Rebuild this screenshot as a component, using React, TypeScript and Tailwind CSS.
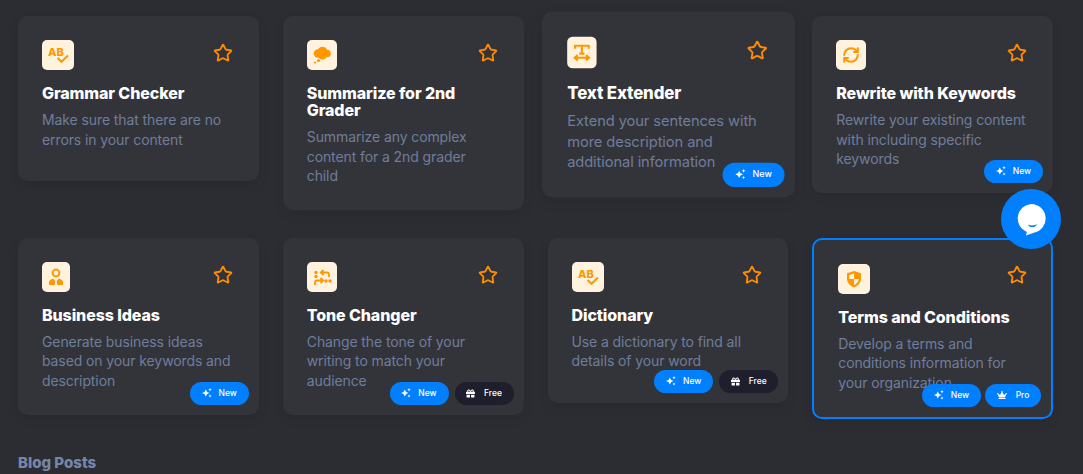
import { RefreshCw, Star } from "lucide-react";
import { FaCrown, FaGift } from "react-icons/fa";
import type { ReactNode } from "react";

const abIcon = (
  <svg width="32" height="30" viewBox="0 0 32 30" fill="none">
    <text x="6" y="15.500" fontSize="11" fontWeight="800" fill="#ff9800" fontFamily="Inter, sans-serif">AB</text>
    <path d="M15.500 18l4 3.800 6.500-6.300" stroke="#ff9800" strokeWidth="2" />
  </svg>
);

const cloudIcon = (
  <svg width="30" height="30" viewBox="0 0 30 30" fill="#ff9800">
    <circle cx="11" cy="13.500" r="4.200" />
    <circle cx="15.500" cy="11.500" r="4.800" />
    <circle cx="20" cy="13.500" r="3.800" />
    <circle cx="15.500" cy="15.500" r="4" />
    <circle cx="11.500" cy="20.500" r="1.500" />
    <circle cx="8" cy="22.500" r="1.100" />
  </svg>
);

const textIcon = (
  <svg width="28" height="30" viewBox="0 0 28 30" fill="none" stroke="#ff9800" strokeWidth="2">
    <path d="M7.500 11.500V8.500h13v3M14 8.500v7.500M11.500 16h5" />
    <path d="M7.500 20h13M10 17.500L7.200 20l2.800 2.500M18 17.500l2.800 2.500-2.800 2.500" />
  </svg>
);

const personIcon = (
  <svg width="28" height="30" viewBox="0 0 28 30" fill="none">
    <circle cx="14" cy="11" r="3.400" stroke="#ff9800" strokeWidth="2" />
    <path d="M7 23v-2.500c0-2.200 2-3.600 4.500-3.800L13.200 19l-.4 4zM21 23v-2.500c0-2.200-2-3.600-4.500-3.800L14.800 19l.4 4z" fill="#ff9800" />
  </svg>
);

const toneIcon = (
  <svg width="30" height="30" viewBox="0 0 30 30" fill="none" stroke="#ff9800" strokeWidth="1.800">
    <circle cx="9" cy="10.500" r="1.700" fill="#ff9800" stroke="none" />
    <circle cx="9" cy="14.500" r="1.700" fill="#ff9800" stroke="none" />
    <path d="M22 15v-2.500c0-1.200-.8-2-2-2h-6M16.500 8l-2.700 2.500 2.700 2.500" />
    <circle cx="19" cy="19" r="1.700" fill="#ff9800" stroke="none" />
    <circle cx="23" cy="19" r="1.700" fill="#ff9800" stroke="none" />
    <path d="M8 23v-2.500c0-1.200.8-2 2-2h6M13.500 16l2.700 2.500-2.700 2.500" />
  </svg>
);

const shieldIcon = (
  <svg width="32" height="30" viewBox="0 0 32 30">
    <path d="M16 7l7 2.300v5.200c0 4.300-2.900 7.400-7 9-4.100-1.600-7-4.700-7-9V9.300z" fill="#ff9800" />
    <path d="M16 9.500l-4.800 1.600V15H16zM16 15h4.800c-.4 2.800-2.200 4.700-4.800 6z" fill="#fff3e0" />
  </svg>
);

const refreshIcon = (
  <div className="flex h-[30px] w-[30px] items-center justify-center">
    <RefreshCw size={18} color="#ff9800" strokeWidth={2.800} />
  </div>
);

function Sparkle() {
  return (
    <svg width="10" height="10" viewBox="0 0 10 10" fill="#fff">
      <path d="M3.800 1.500l1.300 2.400L7.500 5 5.100 6.100 3.800 8.500 2.500 6.100 0 5l2.500-1.100z" />
      <path d="M8 0l.5 1.200 1.200.5-1.200.5L8 3.400l-.5-1.200-1.200-.5 1.200-.5zM8 6.500l.5 1 1 .5-1 .5-.5 1-.5-1-1-.5 1-.5z" />
    </svg>
  );
}

function Badge({ kind }: { kind: string }) {
  if (kind === "Free") {
    return (
      <span className="flex h-[23px] w-[59px] items-center justify-center gap-[9px] rounded-full bg-[#1e1e2d] text-[8.5px] font-medium text-white">
        <FaGift size={9} />
        Free
      </span>
    );
  }
  if (kind === "Pro") {
    return (
      <span className="flex h-[23px] w-[56px] items-center justify-center gap-[9px] rounded-full bg-[#007fff] text-[8.5px] font-medium text-white">
        <FaCrown size={10} />
        Pro
      </span>
    );
  }
  return (
    <span className="flex h-[23px] w-[59px] items-center justify-center gap-[7px] rounded-full bg-[#007fff] text-[8.5px] font-medium text-white">
      <Sparkle />
      New
    </span>
  );
}

type Tool = {
  title: string;
  desc: string;
  icon: ReactNode;
  badges: string[];
  scaled?: boolean;
  active?: boolean;
};

const tools: Tool[] = [
  { title: "Grammar Checker", desc: "Make sure that there are no errors in your content", icon: abIcon, badges: [] },
  { title: "Summarize for 2nd Grader", desc: "Summarize any complex content for a 2nd grader child", icon: cloudIcon, badges: [] },
  { title: "Text Extender", desc: "Extend your sentences with more description and additional information", icon: textIcon, badges: ["New"], scaled: true },
  { title: "Rewrite with Keywords", desc: "Rewrite your existing content with including specific keywords", icon: refreshIcon, badges: ["New"] },
  { title: "Business Ideas", desc: "Generate business ideas based on your keywords and description", icon: personIcon, badges: ["New"] },
  { title: "Tone Changer", desc: "Change the tone of your writing to match your audience", icon: toneIcon, badges: ["New", "Free"] },
  { title: "Dictionary", desc: "Use a dictionary to find all details of your word", icon: abIcon, badges: ["New", "Free"] },
  { title: "Terms and Conditions", desc: "Develop a terms and conditions information for your organization", icon: shieldIcon, badges: ["New", "Pro"], active: true },
];

function ToolCard({ tool }: { tool: Tool }) {
  return (
    <div
      className={`relative min-h-[165px] rounded-[10px] bg-[#33343a] pt-6 pr-6 pb-6 pl-6 shadow-[0_4px_12px_rgba(0,0,0,0.08)] ${tool.scaled ? "scale-[1.05]" : ""} ${tool.active ? "border-2 border-[#007fff]" : ""}`}
    >
      <div className="w-fit overflow-hidden rounded-[5px] bg-[#fff3e0]">{tool.icon}</div>
      <Star
        size={20}
        color="#ff8c00"
        strokeWidth={2.200}
        className={`absolute ${tool.active ? "top-[25px] right-[24px]" : "top-[27px] right-[26px]"}`}
      />
      <h3 className="mt-[15px] text-[16px] leading-[17px] font-extrabold tracking-[-0.1px] text-white">{tool.title}</h3>
      <p className="mt-2 text-[14px] leading-[19.6px] tracking-[-0.1px] text-[#6f7d9c]">{tool.desc}</p>
      <div className={`absolute right-2.5 bottom-2.5 flex ${tool.active ? "gap-1" : "gap-1.5"}`}>
        {tool.badges.map((b) => (
          <Badge key={b} kind={b} />
        ))}
      </div>
    </div>
  );
}

export default function App() {
  return (
    <div className="relative h-[474px] overflow-hidden bg-[#2c2d32] font-['Inter',sans-serif]">
      <div className="w-[1071px] pt-4 pl-[18px] pr-[18px]">
        <div className="grid grid-cols-4 items-start gap-x-6 gap-y-7">
          {tools.map((t) => (
            <ToolCard key={t.title} tool={t} />
          ))}
        </div>
        <h2 className="mt-[34px] text-[15px] leading-5 font-extrabold text-[#7587a8]">Blog Posts</h2>
      </div>

      {/* chat launcher */}
      <div className="absolute top-[189px] left-[1001px] flex h-[60px] w-[60px] items-center justify-center rounded-full bg-[#007fff]">
        <svg width="32" height="34" viewBox="0 0 32 34">
          <path d="M16 2a14.500 14.500 0 0 1 3.500 28.600L11 33.500l.8-3.600A14.500 14.500 0 0 1 16 2z" fill="#fff" />
          <path d="M13 22.500c2.500 1.300 6.500 1.300 9-.5-.5 3.800-8 4.300-9 .5z" fill="#007fff" />
        </svg>
      </div>
    </div>
  );
}
